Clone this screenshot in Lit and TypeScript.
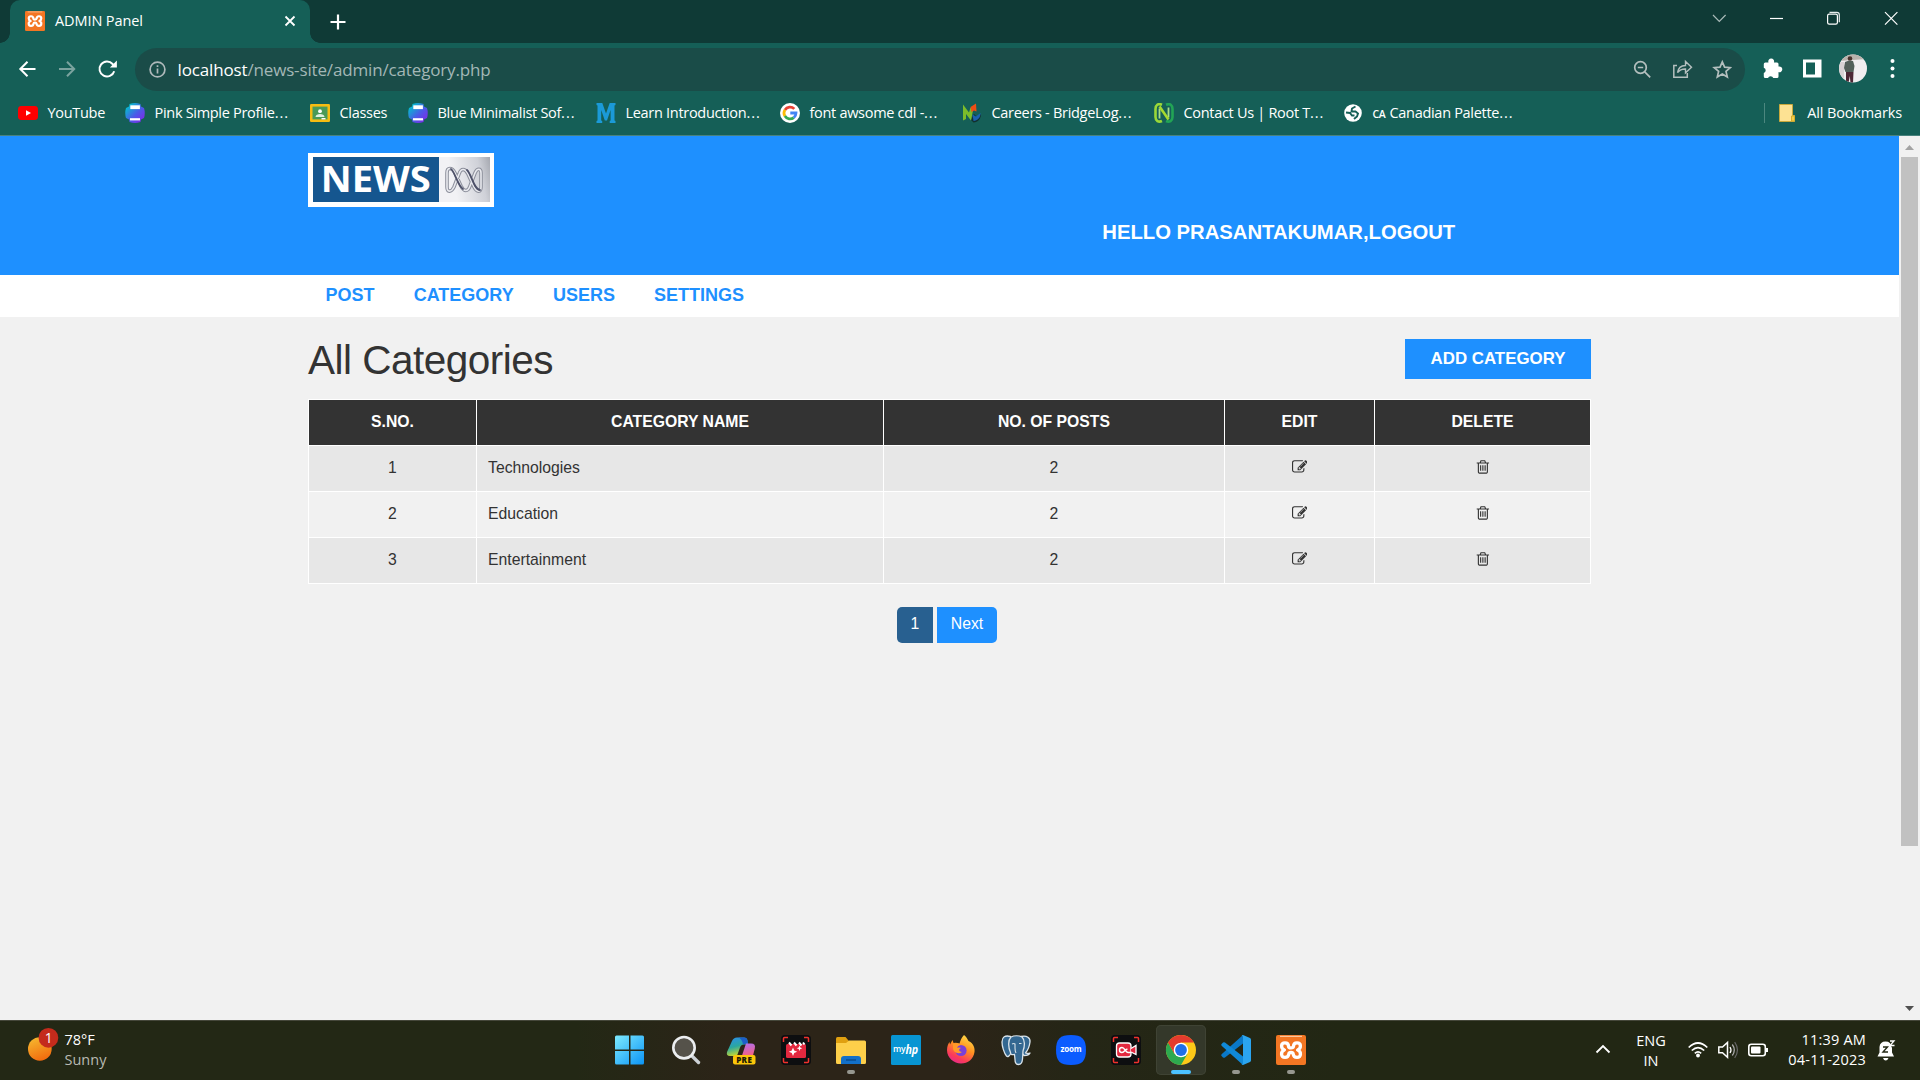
import { LitElement, html, css, svg, TemplateResult } from "lit";
import { customElement } from "lit/decorators.js";

const xamppIcon = html`<svg viewBox="0 0 30 30" class="fill">
  <rect width="30" height="30" rx="2" fill="#f37623"/>
  <path d="M4 1.4h22" stroke="#fbc59c" stroke-width="1.2"/>
  <path d="M12.600 11.600C12.500 9 11 7.900 9 7.900c-4.600 0-4.300 5.600-.6 7.100-3.900 1.400-3.900 7.400.6 7.400 3.400 0 3.700-2 3.900-3.800.2-1.500 4-1.500 4.200 0 .2 1.800.5 3.800 3.900 3.800 4.500 0 4.500-6 .6-7.400 3.700-1.500 4-7.100-.6-7.100-2 0-3.500 1.100-3.600 3.700-.2 1.700-4.700 1.700-4.800 0z" fill="none" stroke="#fff" stroke-width="3.300" stroke-linejoin="round"/>
</svg>`;

const youtubeIcon = html`<svg viewBox="0 0 20 20" class="fill"><rect y="3" width="20" height="14" rx="3.400" fill="#f00"/><path d="M8 7.200v5.600l5-2.800z" fill="#fff"/></svg>`;

const canvaIcon = (id: string) => html`<svg viewBox="0 0 20 20" class="fill">
  <defs><linearGradient id=${id} x1="0" y1="0" x2="1" y2="1"><stop offset="0.100" stop-color="#00c4cc"/><stop offset="0.550" stop-color="#4a5be8"/><stop offset="0.900" stop-color="#7d2ae8"/></linearGradient></defs>
  <path d="M4.500 1Q10-1 15.500 1L16 3.500l3 1.500q1.500 5 0 10L16 16.500l-.5 2.500Q10 21 4.500 19L4 16.500 1 15q-1.500-5 0-10l3-1.500z" fill="url(#${id})"/>
  <rect x="5.300" y="2.300" width="9.600" height="3.800" fill="#fff"/><rect x="5" y="15.200" width="10" height="2.200" fill="#fff"/>
</svg>`;

const classesIcon = html`<svg viewBox="0 0 20 20" class="fill"><rect y="1" width="20" height="18" rx="1.200" fill="#f6bc12"/><rect x="2.500" y="3.600" width="15" height="12.800" fill="#4a9a57"/><circle cx="10" cy="8.200" r="1.900" fill="#fff"/><path d="M5.500 14c0-4 9-4 9 0z" fill="#dff0e0"/><path d="M11.500 15h4v1.400h-4z" fill="#fff"/></svg>`;

const mIcon = html`<svg viewBox="0 0 20 20" class="fill"><path d="M.5 0h5.800L10 10.500 13.700 0h5.800v2l-1 .5v15l1 .6V20h-5.800v-1.900l.9-.6V7L11 17.500H8.800L5.200 7v10.500l1 .6V20H.5v-1.900l1-.6v-15l-1-.5z" fill="#1b9ad8"/></svg>`;

const googleIcon = html`<svg viewBox="0 0 20 20" class="fill"><circle cx="10" cy="10" r="10" fill="#fff"/>
  <g fill="none" stroke-width="2.800"><path d="M14.300 5.900A6 6 0 0 0 4.900 6.900" stroke="#ea4335"/><path d="M4.900 6.900a6 6 0 0 0 0 6.200" stroke="#fbbc05"/><path d="M4.900 13.100a6 6 0 0 0 8.900 1.500" stroke="#34a853"/><path d="M13.800 14.600A6 6 0 0 0 16 10h-5.700" stroke="#4285f4"/></g></svg>`;

const bridgeIcon = html`<svg viewBox="0 0 20 20" class="fill"><path d="M9 17l3-6 3 3 4-3c0 5-3 8-7.500 8.500z" fill="#12302e"/><path d="M1 17.500V1.500l6 8 1.500-5 2.500 3-2 10-5-6.500v5z" fill="#7cbc2a"/><path d="M8.500 4L14 .5l.5 8L12 7.500 9.500 9z" fill="#ee4e14"/><path d="M10.500 11.500l3.500 2 4.500-3.500c.3 4.500-3 7.500-7 8z" fill="#1b62b0"/></svg>`;

const rootIcon = html`<svg viewBox="0 0 20 20" class="fill"><g fill="none"><path d="M8 1.800C4 0 1.500 2.200 1.500 6v8c0 3.800 3 5.600 6.500 4" stroke="#9bd838" stroke-width="2.600"/><path d="M12 1.800c4-1.800 6.500.4 6.500 4.200v8c0 3.800-3 5.600-6.500 4" stroke="#22a455" stroke-width="2.600"/><path d="M5.500 15.500V5.500M14.500 14.500v-10" stroke="#a9dd86" stroke-width="1.800"/><path d="M5.500 3.500l9 13" stroke="#a6d92f" stroke-width="2.600"/></g></svg>`;

const globeIcon = html`<svg viewBox="0 0 20 20" class="fill"><circle cx="10" cy="10" r="8.800" fill="#fff"/><path d="M12.500 3.500L9 5.500 8.500 8.500h4l2.500 2-1 3-3 2.500M3 9.500l4 .5 2 2.500h2.500" fill="none" stroke="#155f57" stroke-width="1.900"/></svg>`;

interface Bookmark { icon: TemplateResult; label: string; width: number; cut?: boolean; flag?: string; }

const bookmarks: Bookmark[] = [
  { icon: youtubeIcon, label: "YouTube", width: 107 },
  { icon: canvaIcon("cvA"), label: "Pink Simple Profile", cut: true, width: 185 },
  { icon: classesIcon, label: "Classes", width: 98 },
  { icon: canvaIcon("cvB"), label: "Blue Minimalist Sof", cut: true, width: 188 },
  { icon: mIcon, label: "Learn Introduction", cut: true, width: 184 },
  { icon: googleIcon, label: "font awsome cdl -", cut: true, width: 182 },
  { icon: bridgeIcon, label: "Careers - BridgeLog", cut: true, width: 192 },
  { icon: rootIcon, label: "Contact Us | Root T", cut: true, width: 189 },
  { icon: globeIcon, label: "Canadian Palette", cut: true, width: 190, flag: "CA" },
];

const categories = [
  { id: 1, name: "Technologies", posts: 2 },
  { id: 2, name: "Education", posts: 2 },
  { id: 3, name: "Entertainment", posts: 2 },
];

const editIcon = html`<svg viewBox="0 0 1792 1792" class="fa"><path d="M888 1184l116-116-152-152-116 116v56h96v96h56zm440-720q-16-16-33 1l-350 350q-17 17-1 33t33-1l350-350q17-17 1-33zm80 594v190q0 119-84.500 203.500t-203.500 84.500h-832q-119 0-203.500-84.500t-84.500-203.500v-832q0-119 84.500-203.500t203.500-84.500h832q63 0 117 25 15 7 18 23 3 17-9 29l-49 49q-14 14-32 8-23-6-45-6h-832q-66 0-113 47t-47 113v832q0 66 47 113t113 47h832q66 0 113-47t47-113v-126q0-13 9-22l64-64q15-15 35-7t20 29zm-96-738l288 288-672 672h-288v-288zm444 132l-92 92-288-288 92-92q28-28 68-28t68 28l152 152q28 28 28 68t-28 68z"/></svg>`;
const trashIcon = html`<svg viewBox="0 0 1792 1792" class="fa trash"><path d="M704 736v576q0 14-9 23t-23 9h-64q-14 0-23-9t-9-23v-576q0-14 9-23t23-9h64q14 0 23 9t9 23zm256 0v576q0 14-9 23t-23 9h-64q-14 0-23-9t-9-23v-576q0-14 9-23t23-9h64q14 0 23 9t9 23zm256 0v576q0 14-9 23t-23 9h-64q-14 0-23-9t-9-23v-576q0-14 9-23t23-9h64q14 0 23 9t9 23zm128 724v-948h-896v948q0 22 7 40.500t14.500 27 10.500 8.500h832q3 0 10.500-8.500t14.500-27 7-40.500zm-672-1076h448l-48-117q-7-9-17-11h-317q-10 2-17 11zm928 32v64q0 14-9 23t-23 9h-96v948q0 83-47 143.500t-113 60.500h-832q-66 0-113-58.500t-47-141.500v-952h-96q-14 0-23-9t-9-23v-64q0-14 9-23t23-9h309l70-167q15-37 54-63t79-26h320q40 0 79 26t54 63l70 167h309q14 0 23 9t9 23z"/></svg>`;

/* ---------- Browser chrome ---------- */

@customElement("browser-chrome")
class BrowserChrome extends LitElement {
  static styles = css`
    :host { display: block; font-family: "Open Sans", "Noto Sans", sans-serif; color: #fff; background: #155f57; }
    * { box-sizing: border-box; }
    svg { display: block; }
    .fill { width: 100%; height: 100%; }
    .strip { display: flex; height: 43px; background: #0f3a36; }
    .foot { width: 10px; height: 43px; background: radial-gradient(circle 10px at 0 0, transparent 9.5px, #155f57 10px) 0 33px / 10px 10px no-repeat; }
    .foot.right { background: radial-gradient(circle 10px at 10px 0, transparent 9.5px, #155f57 10px) 0 33px / 10px 10px no-repeat; }
    .tab { width: 300px; background: #155f57; border-radius: 10px 10px 0 0; display: flex; align-items: center; padding: 0 14px 2px 15px; }
    .fav { width: 20px; height: 20px; margin-right: 10px; }
    .tabtitle { flex: 1; font-size: 14.5px; line-height: 20px; letter-spacing: -0.1px; }
    .plus { margin: 13.5px 0 0 9.5px; }
    .win { margin-left: auto; display: flex; padding: 10px 15px 0 0; }
    .bar { display: flex; align-items: center; height: 53px; padding: 0 0 1px 18px; }
    .omni { margin-left: 17px; width: 1610px; height: 43px; border-radius: 22px; background: #1a4c48; display: flex; align-items: center; padding: 0 13px 0 14px; }
    .url { margin-left: 11.5px; padding-top: 2px; flex: 1; font-size: 17px; letter-spacing: -0.15px; line-height: 24px; color: #a3b7b6; }
    .url b { font-weight: 400; color: #fff; }
    .ext { margin-left: 12px; }
    .marks { display: flex; height: 39px; padding: 0 18px 5px; align-items: center; font-size: 14.5px; line-height: 20px; letter-spacing: -0.3px; white-space: nowrap; }
    .mark { display: flex; align-items: center; gap: 9.5px; }
    .mark .ic { width: 20px; height: 20px; flex: none; }
    .dots { letter-spacing: 1px; }
    .flag { font-size: 10.5px; font-weight: 600; margin-right: 4px; }
    .all { margin-left: auto; display: flex; align-items: center; border-left: 1px solid #4c877f; height: 20px; padding-left: 14px; gap: 12px; letter-spacing: -0.15px; }
    .line { height: 1px; background: #48827d; }
  `;
  render() {
    return html`
      <div class="strip">
        <div class="foot"></div>
        <div class="tab"><span class="fav">${xamppIcon}</span><span class="tabtitle">ADMIN Panel</span>
          <svg width="12" height="12" viewBox="0 0 12 12"><path d="M1.500 1.500l9 9M10.500 1.500l-9 9" stroke="#fff" stroke-width="1.800"/></svg>
        </div>
        <div class="foot right"></div>
        <svg class="plus" width="16" height="16" viewBox="0 0 16 16"><path d="M8 .5v15M.5 8h15" stroke="#fff" stroke-width="2.200"/></svg>
        <div class="win">
          <svg width="201" height="18" viewBox="0 0 201 18" fill="none" stroke="#e8eeee" stroke-width="1.200">
            <path d="M9 5l6.300 6.500L21.600 5" stroke="#a9bab8"/>
            <path d="M66 8.500h13" stroke="#fff"/>
            <rect x="123.600" y="4.200" width="9.800" height="10" rx="1.600" stroke="#fff"/><path d="M125.500 2.300h7.300a2.500 2.500 0 0 1 2.500 2.500v7.500"/>
            <path d="M181 2.200l12.400 12.400M193.400 2.200l-12.400 12.400" stroke="#fff"/>
          </svg>
        </div>
      </div>
      <div class="bar">
        <svg width="100" height="20" viewBox="0 0 100 20" fill="none" stroke="#fff" stroke-width="2">
          <path d="M17.500 10H3M9.500 2.800L2.300 10l7.200 7.200"/>
          <path d="M41 10h14.500M49 2.800l7.200 7.200-7.200 7.200" stroke="#7ba39f"/>
          <path d="M96.200 12.200a7.500 7.500 0 1 1-1.600-7.200l2 2"/><path d="M98.900 1.500v7h-7z" fill="#fff" stroke="none"/>
        </svg>
        <div class="omni">
          <svg width="17" height="17" viewBox="0 0 17 17"><circle cx="8.500" cy="8.500" r="7.400" fill="none" stroke="#afb9bb" stroke-width="1.700"/><path d="M8.500 7.500v5M8.500 4.300v1.800" stroke="#afb9bb" stroke-width="1.700"/></svg>
          <span class="url"><b>localhost</b>/news-site/admin/category.php</span>
          <svg width="99" height="20" viewBox="0 0 99 20" fill="none" stroke="#b4bfbe" stroke-width="1.700">
            <g transform="translate(0 1)"><circle cx="7.500" cy="7.500" r="5.800"/><path d="M11.700 11.800l5.500 5.500M4.800 7.500h5.400"/></g>
            <path d="M44 6.500h-3.200v11.700h13.500v-4.200" stroke-width="1.500"/><path d="M44.500 13.700c.6-4.500 3.500-7 8-7.200v-4l6 5.800-6 5.500V10c-3.500-.1-6 1-8 3.700z" stroke-width="1.400"/>
            <path d="M89.300 2.800l2.300 5.300 5.800.5-4.400 3.800 1.300 5.600-5-3-5 3 1.300-5.600-4.400-3.800 5.800-.5z" stroke-width="1.700"/>
          </svg>
        </div>
        <svg class="ext" width="160" height="32" viewBox="0 0 160 32">
          <path d="M9 9.500h2.500a2.900 2.900 0 1 1 5.400 0H20a1.500 1.500 0 0 1 1.500 1.500v2.600a2.900 2.900 0 1 1 0 5.500v4.500a1.500 1.500 0 0 1-1.500 1.500h-3.700a2.800 2.800 0 0 0-5.300 0H8.300a1.500 1.500 0 0 1-1.500-1.500V20a2.800 2.800 0 0 0 0-5.300V11a1.500 1.500 0 0 1 1.500-1.500z" fill="#fff"/>
          <path d="M46 6.500h18.500v18H46zM49 9.500v12h9v-12z" fill="#fff" fill-rule="evenodd"/>
          <clipPath id="av"><circle cx="96" cy="15.500" r="14"/></clipPath>
          <g clip-path="url(#av)"><rect x="82" y="1" width="29" height="29" fill="#f1eef0"/><path d="M82 1h29v5l-15 1-14 1z" fill="#b9b2ac"/><rect x="82" y="9" width="5" height="20" fill="#d8d2d4"/><circle cx="93" cy="5.500" r="2.300" fill="#4a332c"/><path d="M88 9l4-1.500 4 .5 1.500 5-1 6h-8l-1.500-4z" fill="#53605a"/><path d="M89 19h7.500l-.5 11h-2.500l-.7-7-1.300 7H89z" fill="#4d2735"/></g>
          <circle cx="135.500" cy="8" r="2" fill="#fff"/><circle cx="135.500" cy="15.500" r="2" fill="#fff"/><circle cx="135.500" cy="23" r="2" fill="#fff"/>
        </svg>
      </div>
      <div class="marks">
        ${bookmarks.map(b => html`<div class="mark" style="width:${b.width}px"><span class="ic">${b.icon}</span><span class="text">${b.flag ? html`<span class="flag">${b.flag}</span>` : ""}${b.label}${b.cut ? html`<span class="dots">...</span>` : ""}</span></div>`)}
        <div class="all">
          <svg width="16" height="18" viewBox="0 0 16 18"><path d="M.5.5h13v11h2v6h-15z" fill="#fde293" stroke="#c9a93c" stroke-width="1"/><path d="M12.500 17v-5h3v5z" fill="#f6cf4c" stroke="#d8ae2a"/></svg>
          <span class="text">All Bookmarks</span>
        </div>
      </div>
      <div class="line"></div>`;
  }
}

/* ---------- News admin page ---------- */

@customElement("news-admin")
class NewsAdmin extends LitElement {
  static styles = css`
    :host { display: flex; height: 884px; font-family: "Liberation Sans", Arial, sans-serif; color: #333; background: #f1f1f1; font-size: 15.75px; line-height: 22.5px; }
    * { box-sizing: border-box; }
    svg { display: block; }
    .page { width: 1899px; }
    .wrap { padding-left: 308px; width: 1591px; }
    .header { height: 139px; background: #1e90ff; padding-top: 17px; }
    .logo { width: 186px; height: 54px; }
    .hello { margin: 14px 0 0 794.3px; color: #fff; font-weight: 700; font-size: 20.25px; line-height: 22px; }
    .nav { height: 42px; background: #fff; }
    .nav .wrap { display: flex; gap: 39.2px; padding-left: 325.5px; padding-top: 7px; color: #1e90ff; font-weight: 700; font-size: 18px; line-height: 26px; }
    .head { display: flex; justify-content: space-between; align-items: flex-start; padding-top: 22px; height: 82px; }
    h1 { margin: -1px 0 0; font-weight: 400; font-size: 40.5px; line-height: 44px; letter-spacing: -0.5px; }
    .add { width: 186px; height: 40px; background: #1e90ff; color: #fff; font-weight: 700; font-size: 16.875px; line-height: 39px; text-align: center; }
    .table { display: grid; grid-template-columns: 167px 406px 340px 149px 215px; grid-auto-rows: 45px; gap: 1px; padding: 1px; background: #fff; width: 1283px; }
    .c { background: #e7e7e7; display: flex; justify-content: center; padding: 11px 11px 0; }
    .c.th { background: #333; color: #fff; font-weight: 700; }
    .c.even { background: #f1f1f1; }
    .c.left { justify-content: flex-start; }
    .fa { width: 15.75px; height: 15.75px; fill: #333; margin-top: 2.4px; }
    .fa.trash { margin-top: 2px; }
    .pages { display: flex; gap: 4px; padding: 23px 0 0 589px; color: #fff; }
    .p { height: 36px; line-height: 34px; text-align: center; background: #1e90ff; width: 60px; border-radius: 0 5px 5px 0; }
    .p.on { background: #286090; width: 36px; border-radius: 5px 0 0 5px; }
    .scroll { width: 21px; background: #f1f1f1; display: flex; flex-direction: column; align-items: center; }
    .thumb { width: 17px; height: 689px; background: #c1c1c1; margin-bottom: auto; }
  `;
  render() {
    const heads = ["S.NO.", "CATEGORY NAME", "NO. OF POSTS", "EDIT", "DELETE"];
    return html`
      <div class="page">
        <div class="header"><div class="wrap">
          <svg class="logo" viewBox="0 0 186 54">
            <defs><linearGradient id="sv" x1="0" y1="0.200" x2="1" y2="0"><stop offset="0.200" stop-color="#f2f2f5"/><stop offset="0.750" stop-color="#cfd1d8"/><stop offset="1" stop-color="#a5a8b0"/></linearGradient></defs>
            <rect width="186" height="54" fill="#fff"/><rect x="5" y="4" width="126" height="45" fill="#15568f"/><rect x="131" y="4" width="51" height="45" fill="url(#sv)"/>
            <text x="12.800" y="38.500" font-family="Open Sans" font-weight="700" font-size="35.500" textLength="110" lengthAdjust="spacingAndGlyphs" fill="#fff">NEWS</text>
            <g fill="none" stroke-linecap="round">
              <path d="M146 34c-3 6-7 5-7 0V20c0-6 5-6 8 0l6 13c3 6 7 6 9 0l5-13c2-5 6-5 6 0v14c0 5-4 6-7 0l-6-13c-3-6-7-6-9 0z" stroke="#8d909c" stroke-width="3.600"/>
              <path d="M146 34c-3 6-7 5-7 0V20c0-6 5-6 8 0l6 13c3 6 7 6 9 0l5-13c2-5 6-5 6 0v14c0 5-4 6-7 0l-6-13c-3-6-7-6-9 0z" stroke="#e8e9ee" stroke-width="1.600"/>
              <path d="M143 16c3 1 7 17 12 20M159 17c4 3 7 20 13 20" stroke="#4d5068" stroke-width="1.800"/>
            </g>
          </svg>
          <div class="hello">HELLO PRASANTAKUMAR,LOGOUT</div>
        </div></div>
        <div class="nav"><div class="wrap"><span>POST</span><span>CATEGORY</span><span>USERS</span><span>SETTINGS</span></div></div>
        <div class="wrap">
          <div class="head"><h1>All Categories</h1><div class="add">ADD CATEGORY</div></div>
          <div class="table">
            ${heads.map(h => html`<div class="c th">${h}</div>`)}
            ${categories.map(r => {
              const k = r.id % 2 ? "c" : "c even";
              return html`<div class=${k}>${r.id}</div><div class="${k} left">${r.name}</div><div class=${k}>${r.posts}</div><div class=${k}>${editIcon}</div><div class=${k}>${trashIcon}</div>`;
            })}
          </div>
          <div class="pages"><div class="p on">1</div><div class="p">Next</div></div>
        </div>
      </div>
      <div class="scroll">
        <svg width="21" height="21" viewBox="0 0 21 21"><path d="M6 14l4.500-5 4.500 5z" fill="#a3a3a3"/></svg>
        <div class="thumb"></div>
        <svg width="21" height="21" viewBox="0 0 21 21"><path d="M6 7l4.500 5L15 7z" fill="#505050"/></svg>
      </div>`;
  }
}

/* ---------- Desktop taskbar ---------- */

const recFrame = svg`<rect width="30" height="30" rx="4" fill="#0d0e10"/><path d="M2.500 7V3.500a1 1 0 0 1 1-1H7M23 2.500h3.500a1 1 0 0 1 1 1V7M27.500 23v3.500a1 1 0 0 1-1 1H23M7 27.500H3.500a1 1 0 0 1-1-1V23" fill="none" stroke="#f0312c" stroke-width="1.500"/>`;

interface TaskApp { icon: TemplateResult; state?: "open" | "active"; }

const apps: TaskApp[] = [
  { icon: html`<svg viewBox="0 0 30 30" class="fill"><defs><linearGradient id="wn" gradientUnits="userSpaceOnUse" x1="0" y1="0" x2="28" y2="30"><stop offset="0" stop-color="#7deaff"/><stop offset="1" stop-color="#0a93f5"/></linearGradient></defs><path d="M1 .5h12v14H-1V2Q-1 .5.500.500zM14.500.5h12q1.500 0 1.500 1.500v12.500H14.500zM-1 16h14v13.500H.5Q-1 29.500-1 28zM14.500 16H28v12q0 1.500-1.500 1.500h-12z" fill="url(#wn)"/></svg>` },
  { icon: html`<svg viewBox="0 0 30 30" class="fill"><path d="M20.500 20.500l7 7" stroke="#cdd1d6" stroke-width="3.400" stroke-linecap="round"/><circle cx="13" cy="12.700" r="10.700" fill="#55524a" stroke="#eceef0" stroke-width="2.600"/></svg>` },
  { icon: html`<svg viewBox="0 0 30 30" class="fill"><defs><linearGradient id="cpA" x1="0" y1="0" x2="0.300" y2="1"><stop offset="0" stop-color="#2c8cf0"/><stop offset="0.550" stop-color="#2aa7a0"/><stop offset="1" stop-color="#c4d632"/></linearGradient><linearGradient id="cpB" x1="0" y1="0" x2="0.200" y2="1"><stop offset="0" stop-color="#b06ef0"/><stop offset="1" stop-color="#f0628a"/></linearGradient></defs>
    <path d="M6 6Q7.500 2.500 11 2.500h7q3 0 3.500 3l.5 4h-4q-3 0-4 3l-2.500 7Q11 21 8 21H4q-4 0-3-4z" fill="url(#cpA)"/><path d="M12 2.500h6q3 0 3.500 3l.5 3-5 1q-1-6-5-7z" fill="#1c5fc9"/><path d="M20 8.500H25q5 0 3.800 5l-1.800 7H16z" fill="url(#cpB)"/>
    <rect x="7" y="20" width="22.500" height="9.500" rx="2" fill="#fcc60a"/><text x="18.200" y="27.600" text-anchor="middle" font-family="Open Sans" font-weight="800" font-size="8" letter-spacing="0.400" fill="#201a05">PRE</text></svg>` },
  { icon: html`<svg viewBox="0 0 30 30" class="fill">${recFrame}<rect x="5" y="9" width="20" height="14" rx="1.500" fill="#e3283f"/><path d="M8 7.500l2.500 3M13 7.500l2.500 3M18 7.500l2.500 3M22 7.500l1.500 2" stroke="#fff" stroke-width="2"/><path d="M12 12.500l1.200 3 3 1.200-3 1.200-1.200 3-1.200-3-3-1.200 3-1.200zM18.500 10.500l.8 2 2 .8-2 .8-.8 2-.8-2-2-.8 2-.8z" fill="#fff"/></svg>` },
  { state: "open", icon: html`<svg viewBox="0 0 30 30" class="fill"><path d="M0 3.500Q0 2 1.500 2h8l3 3.500V9H0z" fill="#e0a010"/><path d="M0 8h10l3-2.500h15.500Q30 5.500 30 7v20.500Q30 29 28.500 29h-27Q0 29 0 27.500z" fill="#fdcf4a"/><path d="M5 29v-5q0-3 3-3h14q3 0 3 3v5z" fill="#1370c8"/><path d="M10 25h10" stroke="#0a4a8c" stroke-width="1.400"/></svg>` },
  { icon: html`<svg viewBox="0 0 30 30" class="fill"><rect width="30" height="30" rx="1.500" fill="#0895d3"/><text x="2" y="17" font-family="Open Sans" font-size="8.500" font-weight="600" fill="#fff" textLength="12.500" lengthAdjust="spacingAndGlyphs">my</text><text x="14.500" y="18.500" font-family="Open Sans" font-size="13" font-weight="700" font-style="italic" fill="#fff" textLength="12.500" lengthAdjust="spacingAndGlyphs">hp</text></svg>` },
  { icon: html`<svg viewBox="0 0 30 30" class="fill"><defs><linearGradient id="ff" x1="0.800" y1="0" x2="0.300" y2="1"><stop offset="0" stop-color="#ffe14a"/><stop offset="0.450" stop-color="#ff9020"/><stop offset="0.800" stop-color="#fb3a5a"/><stop offset="1" stop-color="#e62a8c"/></linearGradient></defs><path d="M18 0c2 1.500 3.500 4 4.500 6C28 8.500 29 14 28.500 17 27.500 24 22 28.500 15 28.500S1 23 1 15c0-4 1.500-6.500 2.500-8L4 9.500 6.500 5l1 3q3-.5 6 .5c1-3 2-6 4.500-8.500z" fill="url(#ff)"/><circle cx="15" cy="15.500" r="5.600" fill="#7a40d8"/><path d="M7 9q5-2 8 1-3 0-4 3c2-1 4 0 4 0-3 1-2 4 1 4-4 3-9 0-9-4z" fill="#ff9a28"/></svg>` },
  { icon: html`<svg viewBox="0 0 30 30" class="fill"><g fill="#336791" stroke="#d9e3ea" stroke-width="1.300" stroke-linejoin="round"><path d="M9.500 1.500C4 0 1 2 1 7c0 4 2 11 4.500 14 1.500 1.500 3-.5 4-2L11 5z"/><path d="M20 1.500C26 0 29.500 3 29 7c-.5 4-2 8-4.500 11q3 1 4.500 0-1 2.500-6 2.500L20 17z"/><path d="M10 2c3-1.500 8-1.500 11 0 3 3 3 9 1 14l-.5 8c-.3 4-2 5.500-4 5.500s-3.500-1.500-3.500-5l-.5-5c-3 .5-4 0-4-2C7 12 7 5 10 2z"/></g><path d="M11 9q2-1 3 0v4q0 3 1 5M18 8.500h2.500" fill="none" stroke="#d9e3ea" stroke-width="1.100"/></svg>` },
  { icon: html`<svg viewBox="0 0 30 30" class="fill"><path d="M15 0C26 0 30 4 30 15S26 30 15 30 0 26 0 15 4 0 15 0z" fill="#0b5cff"/><text x="15" y="17" text-anchor="middle" font-family="Open Sans" font-size="8.500" font-weight="700" fill="#fff" textLength="21" lengthAdjust="spacingAndGlyphs">zoom</text></svg>` },
  { icon: html`<svg viewBox="0 0 30 30" class="fill">${recFrame}<rect x="5.500" y="8" width="14.500" height="14" rx="3" fill="#e3283f" stroke="#fff" stroke-width="1.300"/><path d="M20 13.500l5-3v9l-5-2.500" fill="#e3283f" stroke="#fff" stroke-width="1.300"/><path d="M20 17.500h-3c-2 0-3.500-5-6-5a2.500 2.500 0 0 0 0 5c2.500 0 4-4.500 5.500-3" fill="none" stroke="#fff" stroke-width="1.400"/></svg>` },
  { state: "active", icon: html`<svg viewBox="0 0 30 30" class="fill"><circle cx="15" cy="15" r="15" fill="#fdc918"/><path d="M2 7.500A15 15 0 0 0 15 30l6.500-11.300L8.500 18.700z" fill="#2da94f"/><path d="M28 7.500A15 15 0 0 0 2 7.500l6.500 11.200L15 7.500z" fill="#e33b2e"/><circle cx="15" cy="15" r="7.300" fill="#fff"/><circle cx="15" cy="15" r="5.900" fill="#1f6fe8"/></svg>` },
  { state: "open", icon: html`<svg viewBox="0 0 30 30" class="fill"><path d="M22 0v8.500L4 22.500Q3 23.200 2 22.500L.6 21Q-.3 20.200.6 19.300z" fill="#0a78c8"/><path d="M22 30v-8.500L4 7.500Q3 6.800 2 7.500L.6 9q-.9.800 0 1.700z" fill="#1089d8"/><path d="M22 0l7 3q1 .5 1 1.700v20.600q0 1.200-1 1.700l-7 3q-1 .2-1.500-.5 1.500.5 1.500-1.500V2Q22 0 20.500.5q.5-.7 1.500-.5z" fill="#2ba5f0"/></svg>` },
  { state: "open", icon: xamppIcon },
];

@customElement("desktop-taskbar")
class DesktopTaskbar extends LitElement {
  static styles = css`
    :host { display: flex; height: 60px; color: #fff; font-family: "Open Sans", "Noto Sans", sans-serif; font-size: 14.5px; letter-spacing: -0.2px; line-height: 20px; border-top: 1px solid #45473a; background: linear-gradient(90deg, #232815 0, #232815 30%, #2c2418 38%, #2c2418 50%, #252616 56%, #222714 70%); box-sizing: border-box; }
    * { box-sizing: border-box; }
    svg { display: block; overflow: visible; }
    .fill { width: 100%; height: 100%; }
    .weather { width: 606px; display: flex; padding: 6px 0 0 28px; }
    .wx { width: 36.5px; }
    .dim { color: #b9bab3; }
    .apps { display: flex; padding-top: 4px; }
    .app { width: 50px; height: 50px; margin-right: 5px; padding: 10px 10px 0; border-radius: 5px; }
    .ic { display: block; width: 30px; height: 30px; }
    .app.active { background: #34382a; box-shadow: inset 0 0 0 1px #3f4334; }
    .dot { width: 8px; height: 4px; border-radius: 2px; background: #96978f; margin: 5px auto 0; }
    .active .dot { width: 20px; background: #4cc2ff; }
    .tray { margin-left: auto; display: flex; padding: 9px 24px 0 0; }
    .lang { width: 48px; text-align: center; letter-spacing: 0; padding-top: 1px; }
    .clock { width: 86px; text-align: right; letter-spacing: 0.2px; }
    .rows { margin-top: 3px; letter-spacing: 0; }
    .bell { margin-left: 11px; }
  `;
  render() {
    return html`
      <div class="weather">
        <svg class="wx" width="37" height="40" viewBox="0 0 37 40"><defs><linearGradient id="sun" x1="0.300" y1="0" x2="0.700" y2="1"><stop offset="0" stop-color="#f5b62e"/><stop offset="1" stop-color="#f2670c"/></linearGradient></defs><circle cx="12" cy="22" r="12" fill="url(#sun)"/><circle cx="20.700" cy="10.700" r="10" fill="#c42b1c"/><text x="20.800" y="15.500" text-anchor="middle" font-size="14" fill="#fff">1</text></svg>
        <div class="rows">
          <div>78°F</div><div class="dim">Sunny</div>
        </div>
      </div>
      <div class="apps">${apps.map(a => html`<div class="app ${a.state ?? ""}"><span class="ic">${a.icon}</span>${a.state ? html`<div class="dot"></div>` : ""}</div>`)}</div>
      <div class="tray">
        <svg width="31" height="40" viewBox="0 0 31 40"><path d="M.500 22.500l6.500-6.500 6.500 6.500" fill="none" stroke="#fff" stroke-width="1.800"/></svg>
        <div class="lang"><div>ENG</div><div>IN</div></div>
        <svg width="105" height="40" viewBox="0 0 105 40" fill="none" stroke="#fff">
          <g transform="translate(13 0)"><path d="M.7 17.500q9.300-9 18.600 0" stroke-width="1.700"/><path d="M3.800 20.500q6.200-5.800 12.400 0" stroke-width="1.700"/><path d="M6.800 23.300q3.200-3 6.400 0" stroke-width="1.600"/><circle cx="10" cy="25.500" r="1.900" fill="#fff" stroke="none"/></g>
          <g transform="translate(43 0)"><path d="M.8 17h3.700l5-4.600v15l-5-4.600H.8z" stroke-width="1.500"/><path d="M12 17q2 3 0 6" stroke-width="1.300"/><path d="M14.300 14.500q4 5.500 0 11" stroke-width="1.300" stroke="#aaa"/><path d="M16.700 12.200q5.500 7.800 0 15.600" stroke-width="1.200" stroke="#666"/></g>
          <g transform="translate(73 0)"><rect x=".8" y="14.300" width="16.500" height="11.400" rx="2.500" stroke-width="1.600"/><rect x="3" y="16.500" width="9.500" height="7" rx="1" fill="#fff" stroke="none"/><path d="M19 18v4" stroke-width="2"/></g>
        </svg>
        <div class="clock"><div>11:39 AM</div><div>04-11-2023</div></div>
        <svg class="bell" width="19" height="40" viewBox="0 0 19 40"><path d="M.5 26.500l2-4v-5.500Q3 11.500 8.500 11.500T15 17v5.500l2 4z" fill="#fff"/><path d="M6 28h5.500q-1 2.500-2.800 2.500T6 28z" fill="#fff"/><path d="M6 17h4.500L6 22h5" fill="none" stroke="#232815" stroke-width="1.400"/><path d="M12 10h6v8h-3z" fill="#232815"/><path d="M13 11h4l-4 4.500h4.500" fill="none" stroke="#fff" stroke-width="1.300"/></svg>
      </div>`;
  }
}

@customElement("app-root")
class AppRoot extends LitElement {
  static styles = css`:host { display: flex; flex-direction: column; width: 1920px; height: 1080px; overflow: hidden; }`;
  render() {
    return html`<browser-chrome></browser-chrome><news-admin></news-admin><desktop-taskbar></desktop-taskbar>`;
  }
}
